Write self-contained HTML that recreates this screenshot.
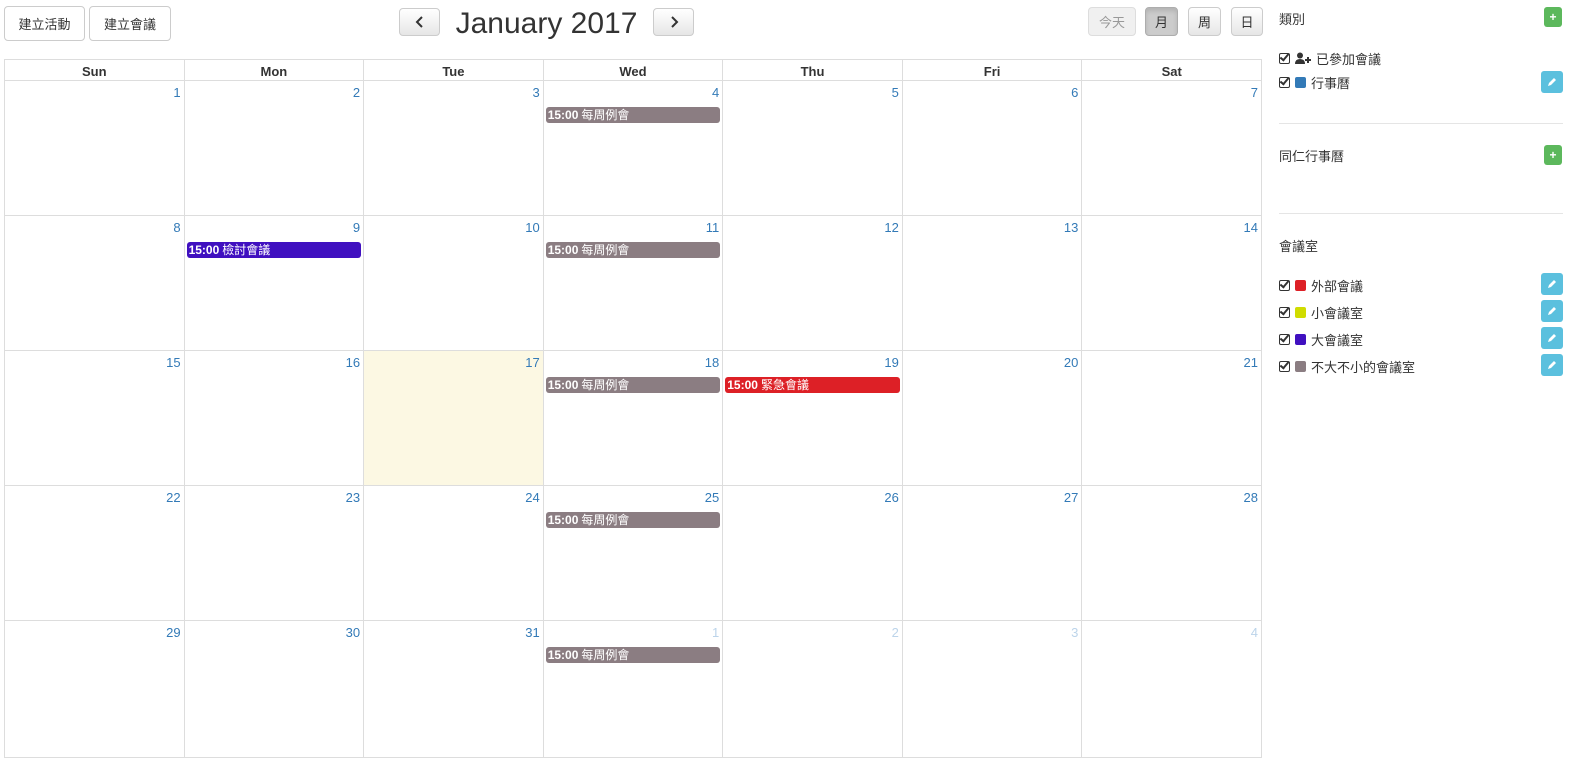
<!DOCTYPE html>
<html><head><meta charset="utf-8"><style>
*{box-sizing:border-box;margin:0;padding:0}
body{width:1580px;height:770px;background:#fff;font-family:"Liberation Sans","Noto Sans CJK TC",sans-serif;color:#333;position:relative;overflow:hidden;font-size:13px}
.btn{position:absolute;border:1px solid #ccc;border-radius:4px;background:linear-gradient(#fff,#e6e6e6);display:flex;align-items:center;justify-content:center;font-size:13px;color:#333}
.plain{background:#fff}
.title{position:absolute;left:440px;width:213px;top:7px;text-align:center;font-size:30px;color:#333}
table{position:absolute;left:4px;top:59px;border-collapse:collapse;width:1258px;table-layout:fixed}
td,th{border:1px solid #ddd;vertical-align:top;position:relative}
th{height:21px;font-size:13px;font-weight:bold;color:#333;vertical-align:middle;padding-top:2px}
td{height:135px}
.n{position:absolute;right:3px;top:4px;color:#337ab7;font-size:13px}
.o .n{color:#bcd4ea}
.today{background:#fcf8e3}
.ev{position:absolute;left:2px;right:2px;top:26px;height:16px;border-radius:3px;color:#fff;font-size:12px;line-height:16px;padding-left:2px;white-space:nowrap}
.ev b{margin-right:3px}
.s{position:absolute;font-size:13px;color:#333}
.row{position:absolute;left:1279px;display:flex;align-items:center;font-size:13px}
.cb{width:11px;height:11px;border:1.5px solid #333;border-radius:2px;margin-right:5px;position:relative}
.cb:after{content:"";position:absolute;left:2px;top:-2px;width:3px;height:7px;border:solid #333;border-width:0 2px 2px 0;transform:rotate(40deg)}
.sw{width:11px;height:11px;border-radius:2px;margin-right:5px}
.ed{position:absolute;left:1541px;width:22px;height:22px;border-radius:3px;background:#5bc0de;display:flex;align-items:center;justify-content:center}
.add{position:absolute;left:1544px;width:18px;height:20px;border-radius:3px;background:#5cb85c;color:#fff;font-size:12px;font-weight:bold;display:flex;align-items:center;justify-content:center}
.hr{position:absolute;left:1279px;width:284px;height:1px;background:#e5e5e5}
</style></head><body>
<div class="btn plain" style="left:4px;top:6px;width:81px;height:35px">建立活動</div>
<div class="btn plain" style="left:89px;top:6px;width:82px;height:35px">建立會議</div>
<div class="btn" style="left:399px;top:8px;width:41px;height:28px"><svg width="10" height="12"><path d="M7 1L2 6L7 11" stroke="#333" stroke-width="2" fill="none"/></svg></div>
<div class="title">January 2017</div>
<div class="btn" style="left:653px;top:8px;width:41px;height:28px"><svg width="10" height="12"><path d="M3 1L8 6L3 11" stroke="#333" stroke-width="2" fill="none"/></svg></div>
<div class="btn" style="left:1088px;top:7px;width:48px;height:29px;color:#999;background:#f0f0f0;border-color:#ddd">今天</div>
<div class="btn" style="left:1145px;top:7px;width:33px;height:29px;background:#ccc;border-color:#adadad;box-shadow:inset 0 3px 5px rgba(0,0,0,.125)">月</div>
<div class="btn" style="left:1188px;top:7px;width:33px;height:29px">周</div>
<div class="btn" style="left:1231px;top:7px;width:32px;height:29px">日</div>
<table>
<tr><th>Sun</th><th>Mon</th><th>Tue</th><th>Wed</th><th>Thu</th><th>Fri</th><th>Sat</th></tr>
<tr><td><span class="n">1</span></td><td><span class="n">2</span></td><td><span class="n">3</span></td><td><span class="n">4</span><div class="ev" style="background:#8b7d82"><b>15:00</b>每周例會</div></td><td><span class="n">5</span></td><td><span class="n">6</span></td><td><span class="n">7</span></td></tr>
<tr><td><span class="n">8</span></td><td><span class="n">9</span><div class="ev" style="background:#4010c0"><b>15:00</b>檢討會議</div></td><td><span class="n">10</span></td><td><span class="n">11</span><div class="ev" style="background:#8b7d82"><b>15:00</b>每周例會</div></td><td><span class="n">12</span></td><td><span class="n">13</span></td><td><span class="n">14</span></td></tr>
<tr><td><span class="n">15</span></td><td><span class="n">16</span></td><td class="today"><span class="n">17</span></td><td><span class="n">18</span><div class="ev" style="background:#8b7d82"><b>15:00</b>每周例會</div></td><td><span class="n">19</span><div class="ev" style="background:#dd2026"><b>15:00</b>緊急會議</div></td><td><span class="n">20</span></td><td><span class="n">21</span></td></tr>
<tr><td><span class="n">22</span></td><td><span class="n">23</span></td><td><span class="n">24</span></td><td><span class="n">25</span><div class="ev" style="background:#8b7d82"><b>15:00</b>每周例會</div></td><td><span class="n">26</span></td><td><span class="n">27</span></td><td><span class="n">28</span></td></tr>
<tr><td style="height:137px"><span class="n">29</span></td><td><span class="n">30</span></td><td><span class="n">31</span></td><td class="o"><span class="n">1</span><div class="ev" style="background:#8b7d82"><b>15:00</b>每周例會</div></td><td class="o"><span class="n">2</span></td><td class="o"><span class="n">3</span></td><td class="o"><span class="n">4</span></td></tr>
</table>
<div class="s" style="left:1279px;top:9px">類別</div>
<div class="add" style="top:7px">+</div>
<div class="row" style="top:49px"><span class="cb"></span><svg width="17" height="13" style="margin-right:4px"><circle cx="5" cy="3.5" r="3" fill="#333"/><path d="M0 12Q0 7 5 7Q10 7 10 12Z" fill="#333"/><path d="M10 8H16M13 5V11" stroke="#333" stroke-width="2"/></svg>已參加會議</div>
<div class="row" style="top:73px"><span class="cb"></span><span class="sw" style="background:#337ab7"></span>行事曆</div>
<div class="ed" style="top:71px"><svg width="10" height="10"><path d="M1 9L2 6L7 1L9 3L4 8Z" fill="#fff"/></svg></div>
<div class="hr" style="top:123px"></div>
<div class="s" style="left:1279px;top:146px">同仁行事曆</div>
<div class="add" style="top:145px">+</div>
<div class="hr" style="top:213px"></div>
<div class="s" style="left:1279px;top:236px">會議室</div>
<div class="row" style="top:276px"><span class="cb"></span><span class="sw" style="background:#dd2026"></span>外部會議</div>
<div class="row" style="top:303px"><span class="cb"></span><span class="sw" style="background:#d0dc00"></span>小會議室</div>
<div class="row" style="top:330px"><span class="cb"></span><span class="sw" style="background:#4010c0"></span>大會議室</div>
<div class="row" style="top:357px"><span class="cb"></span><span class="sw" style="background:#8b7d82"></span>不大不小的會議室</div>
<div class="ed" style="top:273px"><svg width="10" height="10"><path d="M1 9L2 6L7 1L9 3L4 8Z" fill="#fff"/></svg></div>
<div class="ed" style="top:300px"><svg width="10" height="10"><path d="M1 9L2 6L7 1L9 3L4 8Z" fill="#fff"/></svg></div>
<div class="ed" style="top:327px"><svg width="10" height="10"><path d="M1 9L2 6L7 1L9 3L4 8Z" fill="#fff"/></svg></div>
<div class="ed" style="top:354px"><svg width="10" height="10"><path d="M1 9L2 6L7 1L9 3L4 8Z" fill="#fff"/></svg></div>
</body></html>
